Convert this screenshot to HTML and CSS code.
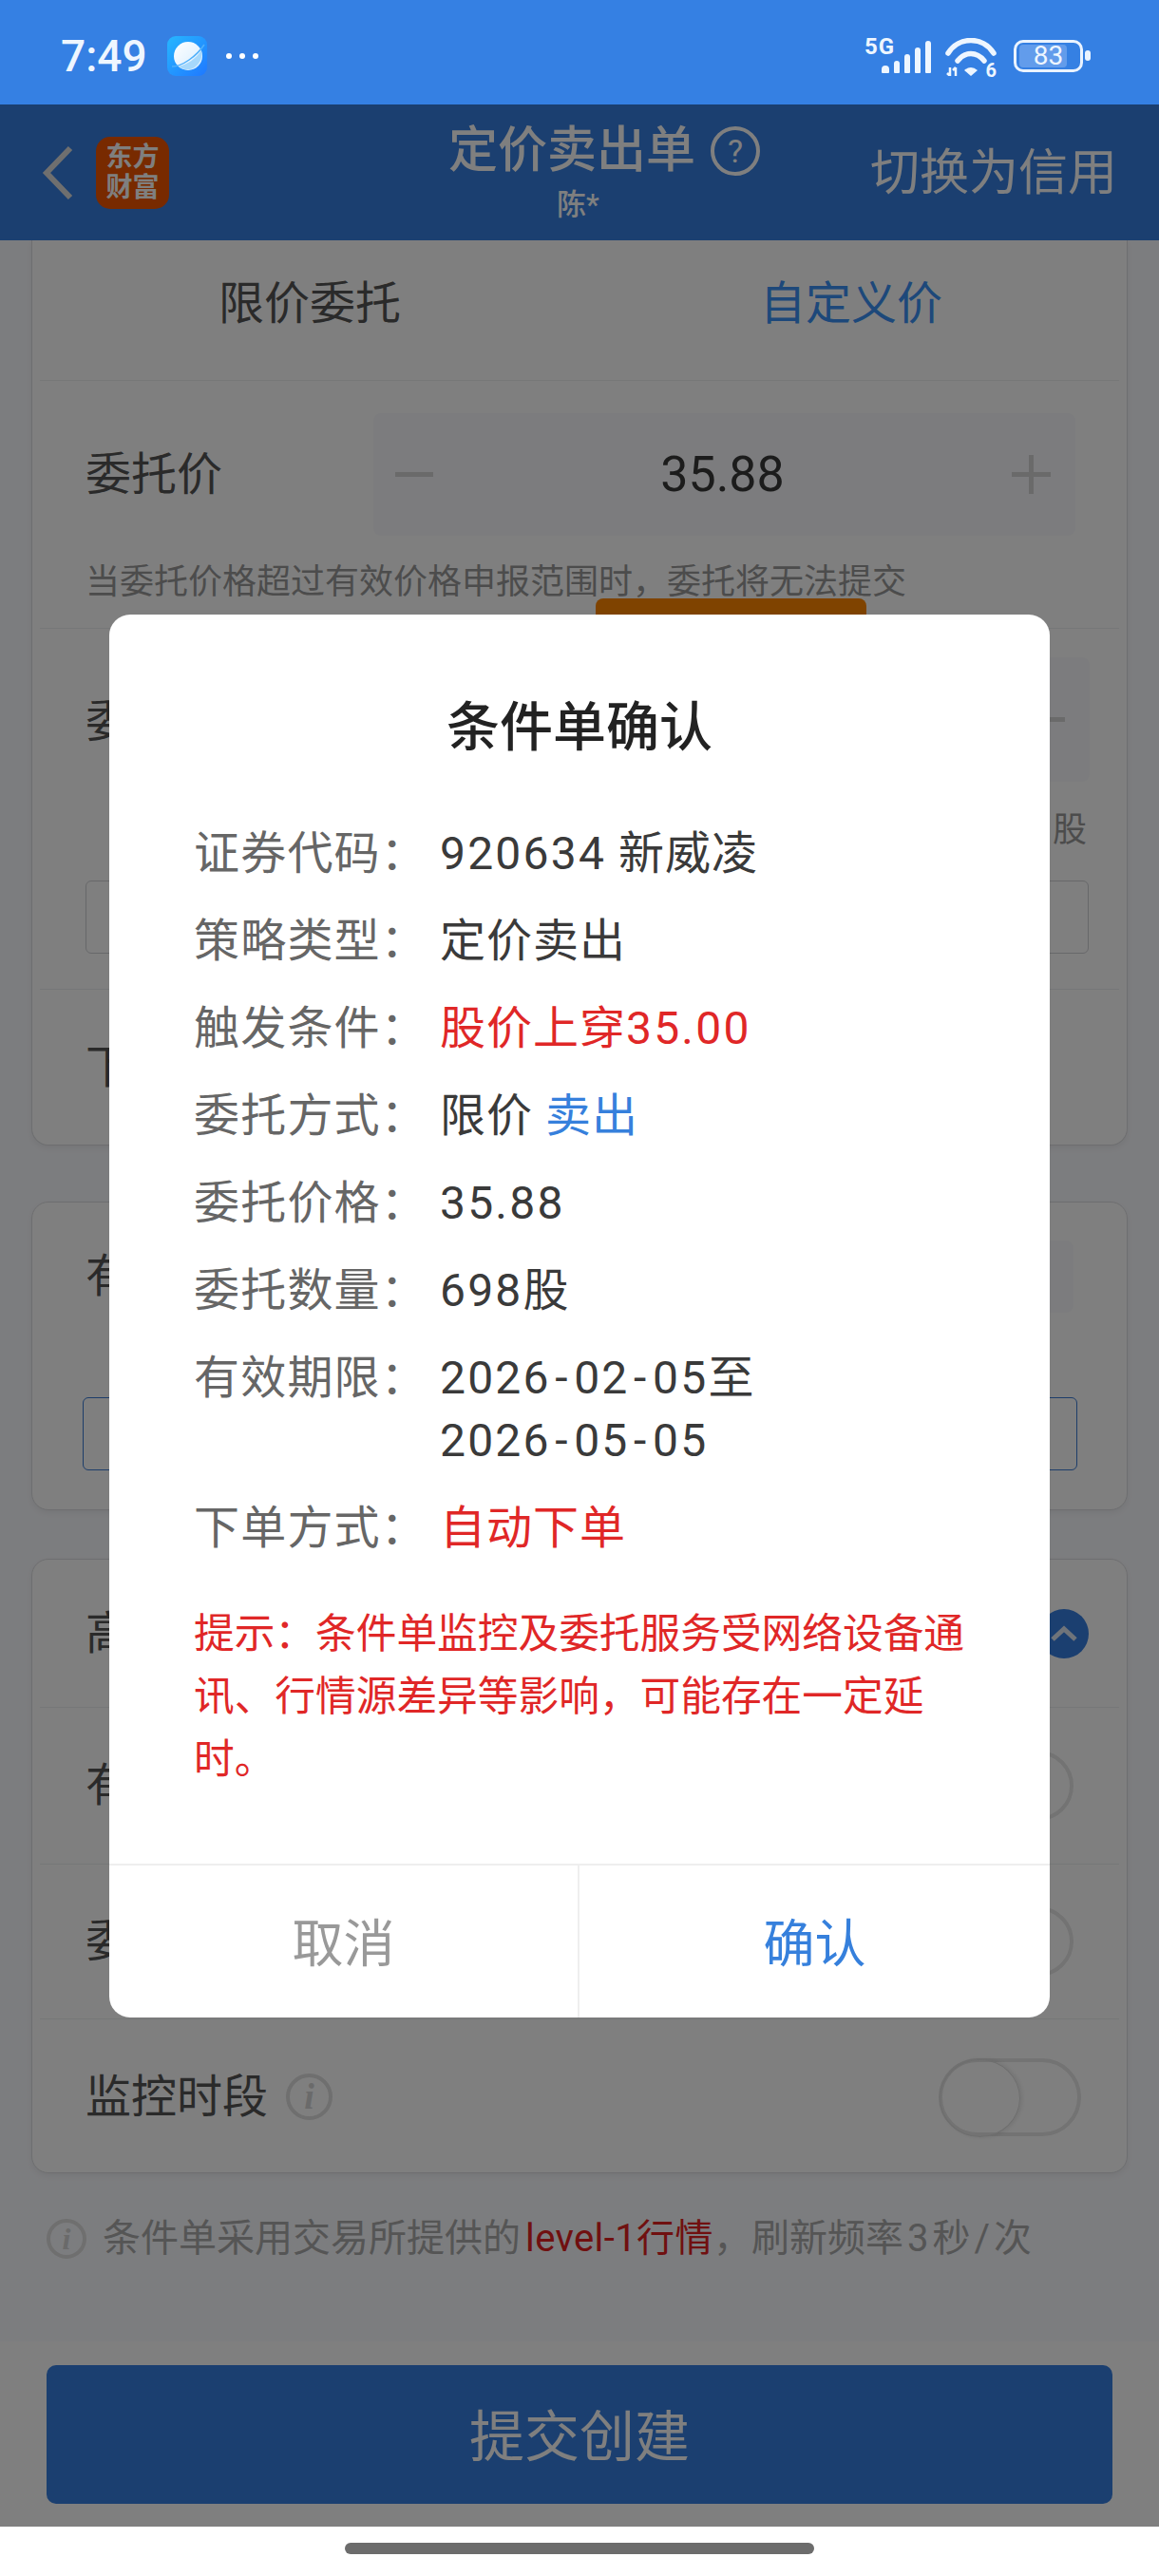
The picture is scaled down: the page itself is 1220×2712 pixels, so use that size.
FILE: index.html
```html
<!DOCTYPE html>
<html lang="zh-CN">
<head>
    <meta charset="UTF-8">
    <meta name="viewport" content="width=device-width, initial-scale=1.0">
    <title>定价卖出单</title>
    <link rel="stylesheet" href="styles.css">
</head>
<body>

    <div id="status-bar">
        <span class="clock">7:49</span>
        <svg class="app-icon" width="42" height="42" viewBox="0 0 42 42">
            <defs>
                <linearGradient id="planet-bg" x1="0" y1="0" x2="1" y2="1">
                    <stop offset="0" stop-color="#27b7ff"/>
                    <stop offset="1" stop-color="#1f78ff"/>
                </linearGradient>
                <linearGradient id="planet-body" x1="0" y1="0" x2="1" y2="1">
                    <stop offset="0" stop-color="#ffffff"/>
                    <stop offset="1" stop-color="#d4ecff"/>
                </linearGradient>
            </defs>
            <rect width="42" height="42" rx="9" fill="url(#planet-bg)"/>
            <circle cx="22" cy="21" r="15" fill="url(#planet-body)"/>
            <path d="M12 32 C21 30 30 24 36 15 C39 27 26 42 12 32Z" fill="#a6d8fb"/>
            <path d="M5 32 C16 32 31 21 39 9" fill="none" stroke="#4fb0fb" stroke-width="1.5"/>
        </svg>
        <span class="more-dots"><i></i><i></i><i></i></span>

        <div class="status-right">
            <span class="net-type">5G</span>
            <span class="signal"><i></i><i></i><i></i><i></i><i></i></span>
            <span class="wifi">
                <svg width="54" height="40" viewBox="0 0 54 40">
                    <path d="M3 16 C14 -2 40 -2 51 16" fill="none" stroke="#eef6ff" stroke-width="5.5" stroke-linecap="round"/>
                    <path d="M13 24 C21 14 33 14 41 24" fill="none" stroke="#eef6ff" stroke-width="5.5" stroke-linecap="round"/>
                    <path d="M20 34 Q27 28 34 34 L27 40Z" fill="#eef6ff"/>
                    <path d="M5 31 V40 M2 37 L5 40 M11 40 V31 M8 34 L11 31" fill="none" stroke="#eef6ff" stroke-width="2.5"/>
                </svg>
                <b>6</b>
            </span>
            <span class="battery"><span class="battery-fill"></span><em>83</em></span>
            <span class="battery-nub"></span>
        </div>
    </div>

    <div id="page">
        <div class="top-nav">
            <svg class="back" width="34" height="58" viewBox="0 0 34 58">
                <polyline points="30,3 5,29 30,55" fill="none" stroke="#dedede" stroke-width="6"/>
            </svg>
            <div class="logo">东方<br>财富</div>
            <div class="nav-title">
                <div class="nav-title-line">定价卖出单 <span class="help">?</span></div>
                <div class="nav-sub">陈*</div>
            </div>
            <div class="nav-switch">切换为信用</div>
        </div>

        <div class="content">
            <!-- 委托设置 -->
            <div class="card card-first">
                <div class="tabs">
                    <div class="tab">限价委托</div>
                    <div class="tab active">自定义价</div>
                </div>

                <div class="row row-price">
                    <div class="row-main">
                        <span class="label">委托价</span>
                        <div class="stepper stepper-price">
                            <span class="minus"></span>
                            <span class="stepper-value">35.88</span>
                            <span class="plus"></span>
                        </div>
                    </div>
                    <p class="hint">当委托价格超过有效价格申报范围时，委托将无法提交</p>
                </div>

                <div class="row row-qty">
                    <span class="pop-tip"></span>
                    <div class="row-main">
                        <span class="label">委托</span>
                        <div class="stepper stepper-qty">
                            <span class="minus"></span>
                        </div>
                    </div>
                    <div class="unit">股</div>
                    <div class="text-box"></div>
                </div>

                <div class="row row-plain row-last">
                    <span class="label">下单</span>
                </div>
            </div>

            <!-- 有效期 -->
            <div class="card card-expire">
                <div class="row-main">
                    <span class="label">有效</span>
                    <div class="stepper stepper-days"></div>
                </div>
                <div class="text-box text-box-active"></div>
            </div>

            <!-- 高级设置 -->
            <div class="card card-advanced">
                <div class="row row-plain row-head">
                    <span class="label">高级</span>
                    <span class="fold">
                        <svg width="30" height="18" viewBox="0 0 30 18">
                            <polyline points="3,15 15,4 27,15" fill="none" stroke="#dfe8f5" stroke-width="5"/>
                        </svg>
                    </span>
                </div>
                <div class="row row-plain row-option-tall">
                    <span class="label">有效</span>
                    <span class="toggle toggle-small"></span>
                </div>
                <div class="row row-plain">
                    <span class="label">委托</span>
                    <span class="toggle toggle-small"></span>
                </div>
                <div class="row row-plain row-last">
                    <span class="label">监控时段</span>
                    <span class="info-icon">i</span>
                    <span class="toggle"></span>
                </div>
            </div>

            <div class="notice">
                <span class="info-icon info-icon-small">i</span>
                <span>条件单采用交易所提供的<em class="level">level-1行情</em>，刷新频率<span class="gap">3</span>秒<span class="gap">/</span>次</span>
            </div>
        </div>

        <div class="footer">
            <button class="submit">提交创建</button>
        </div>

        <!-- 确认弹窗 -->
        <div class="mask">
            <div class="dialog">
                <h2>条件单确认</h2>
                <div class="line"><span class="key">证券代码：</span><span class="val"><span class="num">920634</span> 新威凌</span></div>
                <div class="line"><span class="key">策略类型：</span><span class="val">定价卖出</span></div>
                <div class="line"><span class="key">触发条件：</span><span class="val red">股价上穿<span class="num">35.00</span></span></div>
                <div class="line"><span class="key">委托方式：</span><span class="val">限价 <span class="blue">卖出</span></span></div>
                <div class="line"><span class="key">委托价格：</span><span class="val"><span class="num">35.88</span></span></div>
                <div class="line"><span class="key">委托数量：</span><span class="val"><span class="num">698</span>股</span></div>
                <div class="line"><span class="key">有效期限：</span><span class="val"><span class="num">2026<span class="dash">-</span>02<span class="dash">-</span>05</span>至<br><span class="num">2026<span class="dash">-</span>05<span class="dash">-</span>05</span></span></div>
                <div class="line"><span class="key">下单方式：</span><span class="val red">自动下单</span></div>
                <p class="tip">提示：条件单监控及委托服务受网络设备通讯、行情源差异等影响，可能存在一定延时。</p>
                <div class="dialog-btns">
                    <div class="btn-cancel">取消</div>
                    <div class="btn-ok">确认</div>
                </div>
            </div>
        </div>
    </div>

    <div id="gesture-bar"><span></span></div>

</body>
</html>
```

FILE: styles.css
```css
* {
    box-sizing: border-box;
}

body {
    margin: 0;
    width: 1220px;
    height: 2712px;
    display: flex;
    flex-direction: column;
    overflow: hidden;
    background: #fff;
    font-family: Roboto, "Noto Sans CJK SC", sans-serif;
    color: #555;
}

/* status bar */
#status-bar {
    position: relative;
    height: 110px;
    flex: none;
    display: flex;
    align-items: center;
    padding-left: 64px;
    background: #3580e3;
    color: #eef6ff;
}

.clock {
    width: 112px;
    margin-top: 7px;
    font-size: 46px;
    font-weight: 500;
}

.app-icon {
    flex: none;
    margin-top: 7px;
}

.more-dots {
    display: flex;
    gap: 8px;
    margin: 7px 0 0 20px;
}

.more-dots i {
    width: 6px;
    height: 6px;
    border-radius: 50%;
    background: #fff;
}

.status-right {
    position: absolute;
    top: 38px;
    left: 910px;
    width: 240px;
    height: 44px;
}

.net-type {
    position: absolute;
    left: 0;
    top: -3px;
    font-size: 24px;
    font-weight: 700;
    letter-spacing: 1px;
    line-height: 28px;
}

.signal {
    position: absolute;
    left: 18px;
    top: 5px;
    height: 34px;
    display: flex;
    align-items: flex-end;
    gap: 5px;
}

.signal i {
    width: 6px;
    background: #eef6ff;
    border-radius: 3px 3px 1px 1px;
}

.signal i:nth-child(1) { width: 8px; height: 8px; border-radius: 4px 4px 1px 1px; }
.signal i:nth-child(2) { height: 13px; }
.signal i:nth-child(3) { height: 20px; }
.signal i:nth-child(4) { height: 27px; }
.signal i:nth-child(5) { height: 34px; }

.wifi {
    position: absolute;
    left: 85px;
    top: 2px;
}

.wifi b {
    position: absolute;
    right: 0;
    top: 26px;
    font-size: 20px;
    font-weight: 700;
    line-height: 16px;
}

.battery {
    position: absolute;
    left: 157px;
    top: 4px;
    width: 73px;
    height: 34px;
    border: 3px solid #eaf3ff;
    border-radius: 10px;
}

.battery-fill {
    position: absolute;
    left: 3px;
    top: 2px;
    bottom: 2px;
    width: 50px;
    border-radius: 4px;
    background: #629ceb;
}

.battery em {
    position: relative;
    display: block;
    text-align: center;
    font-style: normal;
    font-size: 28px;
    line-height: 28px;
}

.battery-nub {
    position: absolute;
    left: 232px;
    top: 15px;
    width: 6px;
    height: 11px;
    border-radius: 3px;
    background: #eaf3ff;
}

/* page under the dialog */
#page {
    position: relative;
    flex: 1;
    display: flex;
    flex-direction: column;
    min-height: 0;
}

.top-nav {
    height: 143px;
    flex: none;
    position: relative;
    display: flex;
    align-items: center;
    padding-left: 44px;
    background: #367ee0;
    color: #fff;
}

.back {
    flex: none;
}

.logo {
    width: 77px;
    height: 76px;
    margin-left: 23px;
    border-radius: 15px;
    background: #f05500;
    font-size: 28px;
    font-weight: 700;
    line-height: 32px;
    text-align: center;
    padding-top: 6px;
    flex: none;
}

.nav-title {
    position: absolute;
    left: 472px;
    top: 14px;
    width: 330px;
}

.nav-title-line {
    display: flex;
    align-items: center;
    gap: 16px;
    font-size: 52px;
    font-weight: 500;
    line-height: 70px;
    white-space: nowrap;
}

.help {
    width: 52px;
    height: 52px;
    border: 4px solid #fff;
    border-radius: 50%;
    font-size: 34px;
    font-weight: 400;
    line-height: 44px;
    text-align: center;
}

.nav-sub {
    margin: 3px 0 0 114px;
    font-size: 31px;
    font-weight: 500;
    line-height: 38px;
}

.nav-switch {
    margin: 2px 44px 0 auto;
    font-size: 52px;
    line-height: 60px;
}

.content {
    flex: 1;
    min-height: 0;
    padding: 0 33px;
    background: #f9fafe;
}

/* cards */
.card {
    width: 1154px;
    padding: 0 8px;
    background: #fff;
    border: 1px solid #dcdde0;
    border-radius: 18px;
    box-shadow: 0 3px 6px rgba(0, 0, 0, 0.06);
}

.card-first {
    height: 953px;
    border-top: 0;
    border-top-left-radius: 0;
    border-top-right-radius: 0;
}

.card-expire {
    height: 325px;
    margin-top: 59px;
    padding: 40px 8px 0;
}

.card-advanced {
    height: 647px;
    margin-top: 51px;
}

.tabs {
    display: flex;
    height: 148px;
    border-bottom: 1px solid #eceef0;
}

.tab {
    width: 50%;
    text-align: center;
    font-size: 48px;
    line-height: 134px;
}

.tab:last-child {
    padding-left: 4px;
}

.tab.active {
    color: #3a90f4;
}

.label {
    font-size: 48px;
    line-height: 60px;
    white-space: nowrap;
}

.row {
    position: relative;
    padding: 0 31px 0 48px;
    border-bottom: 1px solid #eceef0;
}

.row-last {
    border-bottom: 0;
}

.row-main {
    display: flex;
    align-items: center;
    justify-content: space-between;
}

.row-price {
    height: 261px;
    padding-top: 34px;
}

.row-qty {
    height: 380px;
    padding-top: 30px;
}

.row-qty .label {
    margin-top: 5px;
}

.row-plain {
    display: flex;
    align-items: center;
    justify-content: space-between;
    height: 163px;
}

.row-head {
    height: 156px;
}

.row-option-tall {
    height: 165px;
}

.card-expire .row-main {
    padding: 0 48px 0 48px;
}

.stepper {
    position: relative;
    display: flex;
    align-items: center;
    justify-content: space-between;
    border-radius: 8px;
    background: #f8f9fc;
}

.stepper-price {
    width: 739px;
    height: 129px;
    margin-right: 15px;
    padding: 0 26px 0 23px;
}

.stepper-qty {
    width: 400px;
    height: 131px;
    padding-right: 26px;
    justify-content: flex-end;
}

.stepper-days {
    width: 400px;
    height: 76px;
}

.stepper-value {
    font-size: 52px;
    color: #383838;
}

.minus {
    width: 40px;
    height: 5px;
    background: #d4d4d4;
}

.plus {
    position: relative;
    width: 41px;
    height: 5px;
    background: #d4d4d4;
}

.plus::after {
    content: "";
    position: absolute;
    left: 18px;
    top: -18px;
    width: 5px;
    height: 41px;
    background: #d4d4d4;
}

.hint {
    margin: 24px 0 0;
    font-size: 36px;
    line-height: 50px;
    color: #999;
    white-space: nowrap;
}

.pop-tip {
    position: absolute;
    left: 585px;
    top: -32px;
    width: 285px;
    height: 30px;
    border-radius: 8px;
    background: #fe8700;
}

.unit {
    margin: 26px 3px 0 0;
    text-align: right;
    font-size: 36px;
    line-height: 50px;
    color: #999;
}

.text-box {
    height: 77px;
    border: 1px solid #cfd0d4;
    border-radius: 6px;
}

.row-qty .text-box {
    margin: 28px 1px 0 0;
}

.card-expire .text-box {
    margin: 89px 44px 0 45px;
}

.text-box-active {
    border-color: #3a7bd5;
}

.fold {
    display: flex;
    align-items: center;
    justify-content: center;
    width: 52px;
    height: 52px;
    margin-right: 1px;
    border-radius: 50%;
    background: #367ee0;
}

.toggle {
    position: relative;
    flex: none;
    width: 150px;
    height: 82px;
    margin-left: auto;
    margin-right: 9px;
    border: 4px solid #e6e6e6;
    border-radius: 41px;
}

.toggle::before {
    content: "";
    position: absolute;
    left: -3px;
    top: -3px;
    width: 83px;
    height: 80px;
    border: 1px solid #dcdcdc;
    border-radius: 50%;
    box-shadow: 2px 0 5px rgba(0, 0, 0, 0.1);
}

.toggle-small {
    width: 138px;
    height: 74px;
    margin-right: 17px;
}

.toggle-small::before {
    width: 76px;
    height: 72px;
}

.info-icon {
    flex: none;
    width: 49px;
    height: 49px;
    margin-left: 19px;
    border: 4px solid #dedede;
    border-radius: 50%;
    color: #d4d4d4;
    font-family: "Liberation Serif", serif;
    font-style: italic;
    font-weight: 700;
    font-size: 38px;
    line-height: 41px;
    text-align: center;
}

.notice {
    display: flex;
    align-items: center;
    margin-top: 47px;
    padding-left: 16px;
    font-size: 40px;
    line-height: 44px;
    color: #aaa;
    white-space: nowrap;
}

.info-icon-small {
    width: 42px;
    height: 42px;
    margin: 0 17px 0 0;
    font-size: 32px;
    line-height: 34px;
}

.level {
    margin-left: 5px;
    font-style: normal;
    letter-spacing: 0.4px;
    color: #e02020;
}

.gap {
    margin: 0 4px;
}

.footer {
    height: 195px;
    flex: none;
    padding: 25px 49px 24px;
    background: #fff;
}

.submit {
    display: block;
    width: 1122px;
    height: 146px;
    padding: 0 0 5px;
    border: 0;
    border-radius: 10px;
    background: #367ee0;
    color: #fff;
    font-family: inherit;
    font-size: 58px;
}

/* dialog */
.mask {
    position: absolute;
    inset: 0;
    display: flex;
    align-items: center;
    justify-content: center;
    background: rgba(0, 0, 0, 0.5);
}

.dialog {
    width: 990px;
    background: #fff;
    border-radius: 22px;
}

.dialog h2 {
    margin: 0 0 54px;
    padding-top: 86px;
    text-align: center;
    font-size: 56px;
    font-weight: 500;
    line-height: 66px;
    color: #222;
}

.line {
    display: flex;
    padding: 13px 0 13px 89px;
    font-size: 48px;
    line-height: 66px;
}

.key {
    width: 259px;
    flex: none;
    color: #666;
    letter-spacing: 1.2px;
}

.val {
    color: #3a3a3a;
    letter-spacing: 1px;
}

.num {
    letter-spacing: 2.2px;
}

.dash {
    margin: 0 4.5px;
}

.red {
    color: #e02727;
}

.blue {
    color: #3680dc;
}

.tip {
    width: 830px;
    margin: 32px 0 77px 89px;
    font-size: 42.7px;
    line-height: 66px;
    color: #e02727;
}

.dialog-btns {
    display: flex;
    height: 162px;
    border-top: 2px solid #eeeeee;
}

.btn-cancel,
.btn-ok {
    width: 50%;
    padding-top: 5px;
    text-align: center;
    font-size: 54px;
    line-height: 158px;
}

.btn-cancel {
    color: #999;
    border-right: 2px solid #eeeeee;
}

.btn-ok {
    color: #3680dc;
}

/* gesture bar */
#gesture-bar {
    height: 52px;
    flex: none;
    display: flex;
    justify-content: center;
    padding-top: 17px;
    background: #fff;
}

#gesture-bar span {
    width: 494px;
    height: 12px;
    border-radius: 6px;
    background: #6c6c6c;
}
```
